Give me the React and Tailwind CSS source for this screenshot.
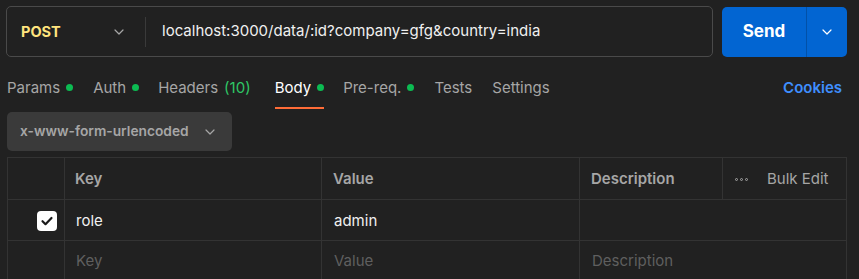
import React from "react";

const Chevron = ({ className = "" }) => (
  <svg width="12" height="12" viewBox="0 0 12 12" className={className} fill="none">
    <path d="M2 4l4 4 4-4" stroke="currentColor" strokeWidth="1.2" strokeLinecap="round" strokeLinejoin="round" />
  </svg>
);

const Dot = () => <span className="inline-block w-[7px] h-[7px] rounded-full bg-[#0cbb52] ml-[6px] mb-[1px]" />;

export default function App() {
  return (
    <div className="w-[859px] h-[279px] bg-[#212121] overflow-hidden text-white" style={{ fontFamily: "Inter, 'Noto Sans', sans-serif" }}>
      {/* top bar */}
      <div className="flex items-stretch h-[51px] mt-[6px] pl-[6px] gap-[9px]">
        <div className="flex items-center w-[707px] border border-[#4a4a4a] rounded-[5px]">
          <div className="flex items-center w-[138px] pl-[14px] pr-[20px] justify-between">
            <span className="text-[14.5px] text-[#ffe47e] font-bold">POST</span>
            <Chevron className="text-[#a6a6a6]" />
          </div>
          <div className="w-px h-[30px] bg-[#3a3a3a]" />
          <div className="pl-[16px] text-[15px] text-[#f0f0f0]">localhost:3000/data/:id?company=gfg&amp;country=india</div>
        </div>
        <div className="flex w-[125px] h-[50px] rounded-[5px] bg-[#0265d2] mt-px">
          <div className="w-[84px] flex items-center justify-center font-bold text-[17px] text-white">Send</div>
          <div className="w-px bg-[#0251a8]" />
          <div className="flex-1 flex items-center justify-center text-white"><Chevron /></div>
        </div>
      </div>

      {/* tabs */}
      <div className="flex items-start h-[55px] pt-[20px] pl-[7px] pr-[17px] text-[15px] text-[#a6a6a6]">
        <div className="flex items-center">Params<Dot /></div>
        <div className="flex items-center ml-[20px]">Auth<Dot /></div>
        <div className="flex items-center ml-[19px]">Headers<span className="text-[#2fc766] ml-[6px]">(10)</span></div>
        <div className="flex flex-col ml-[24px]">
          <div className="flex items-center text-white">Body<Dot /></div>
          <div className="h-[2px] bg-[#ff6c37] mt-[7px] w-[49px]" />
        </div>
        <div className="flex items-center ml-[19px]">Pre-req.<Dot /></div>
        <div className="flex items-center ml-[20px]">Tests</div>
        <div className="flex items-center ml-[20px]">Settings</div>
        <div className="ml-auto text-[#3f8fff] font-semibold">Cookies</div>
      </div>

      {/* body type dropdown */}
      <div className="pl-[7px]">
        <div className="flex items-center justify-between w-[225px] h-[39px] bg-[#3a3a3a] rounded-[5px] pl-[13px] pr-[16px] text-[13.75px] font-semibold text-[#a6a6a6]">
          <span>x-www-form-urlencoded</span>
          <Chevron className="text-[#a6a6a6]" />
        </div>
      </div>

      {/* table */}
      <div className="ml-[7px] mt-[6px] w-[840px] border-l border-t border-r border-[#333333] text-[15px]">
        <div className="flex h-[42px] border-b border-[#333333]">
          <div className="w-[57px] border-r border-[#333333]" />
          <div className="w-[257px] border-r border-[#333333] flex items-center pt-[2px] pl-[10px] font-semibold text-[#a6a6a6]">Key</div>
          <div className="w-[258px] border-r border-[#333333] flex items-center pt-[2px] pl-[11px] font-semibold text-[#a6a6a6]">Value</div>
          <div className="w-[143px] border-r border-[#333333] flex items-center pt-[2px] pl-[11px] font-semibold text-[#a6a6a6]">Description</div>
          <div className="flex-1 flex items-center pt-[2px] pl-[12px] text-[#a6a6a6]">
            <span className="flex gap-[2px] mr-[19px]">
              <span className="w-[3px] h-[3px] rounded-full border border-[#a6a6a6]" />
              <span className="w-[3px] h-[3px] rounded-full border border-[#a6a6a6]" />
              <span className="w-[3px] h-[3px] rounded-full border border-[#a6a6a6]" />
            </span>
            Bulk Edit
          </div>
        </div>
        <div className="flex h-[41px] border-b border-[#333333]">
          <div className="w-[57px] border-r border-[#333333] flex items-center justify-end pr-[7px]">
            <div className="w-[20px] h-[20px] rounded-[4px] bg-white flex items-center justify-center mt-[1px]">
              <svg width="14" height="14" viewBox="0 0 14 14" fill="none">
                <path d="M2.5 7.2l3 3 6-6.2" stroke="#1a1a1a" strokeWidth="2.2" strokeLinecap="round" strokeLinejoin="round" />
              </svg>
            </div>
          </div>
          <div className="w-[257px] border-r border-[#333333] flex items-center pt-[2px] pl-[11px] text-[#f0f0f0]">role</div>
          <div className="w-[258px] border-r border-[#333333] flex items-center pt-[2px] pl-[12px] text-[#f0f0f0]">admin</div>
          <div className="flex-1" />
        </div>
        <div className="flex h-[41px]">
          <div className="w-[57px] border-r border-[#333333]" />
          <div className="w-[257px] border-r border-[#333333] flex items-center pl-[11px] text-[#5f5f5f]">Key</div>
          <div className="w-[258px] border-r border-[#333333] flex items-center pl-[12px] text-[#5f5f5f]">Value</div>
          <div className="flex-1 flex items-center pl-[12px] text-[#5f5f5f]">Description</div>
        </div>
      </div>
    </div>
  );
}
